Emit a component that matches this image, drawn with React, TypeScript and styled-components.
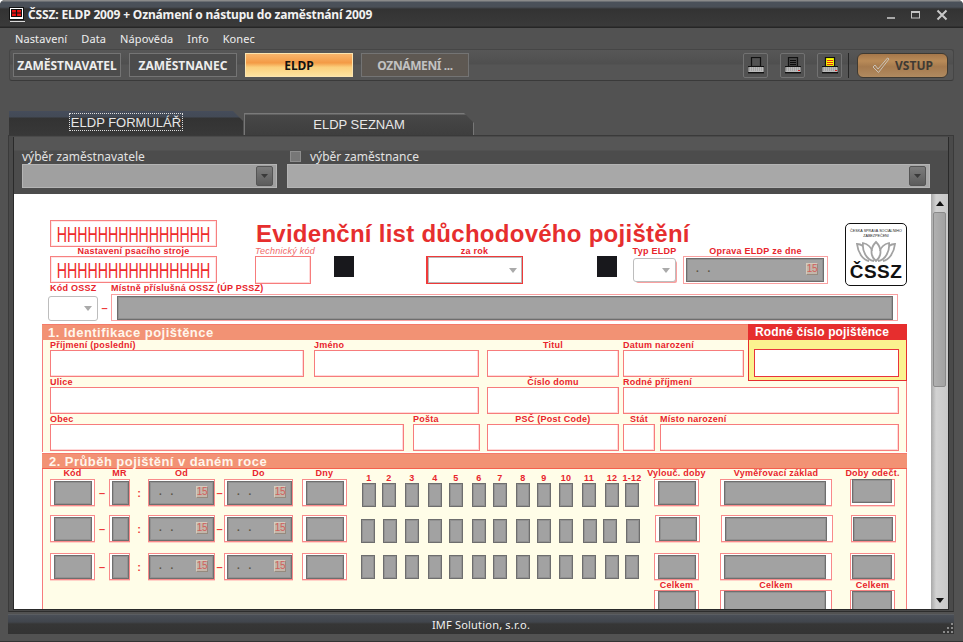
import React from "react";
import styled, { createGlobalStyle } from "styled-components";

const UI_FONT = `"Noto Sans", "Liberation Sans", sans-serif`;
const FORM_FONT = `"Liberation Sans", Arial, sans-serif`;

const GlobalStyle = createGlobalStyle`
  html, body {
    margin: 0;
    padding: 0;
    background: #fff;
  }
  * {
    box-sizing: border-box;
  }
`;

const MENU = ["Nastavení", "Data", "Nápověda", "Info", "Konec"];

const SECTION_ONE = [
  [
    { label: "Příjmení (poslední)", x: 0, w: 254 },
    { label: "Jméno", x: 10, w: 165 },
    { label: "Titul", x: 8, w: 132, center: true },
    { label: "Datum narození", x: 4, w: 121 },
  ],
  [
    { label: "Ulice", x: 0, w: 429 },
    { label: "Číslo domu", x: 8, w: 132, center: true },
    { label: "Rodné příjmení", x: 4, w: 276 },
  ],
  [
    { label: "Obec", x: 0, w: 354 },
    { label: "Pošta", x: 9, w: 67 },
    { label: "PSČ (Post Code)", x: 7, w: 132, center: true },
    { label: "Stát", x: 4, w: 32, center: true },
    { label: "Místo narození", x: 5, w: 239 },
  ],
];

const MONTH_LABELS = ["1", "2", "3", "4", "5", "6", "7", "8", "9", "10", "11", "12", "1-12"];

const MONTH_ROWS = [
  { top: 4, height: 36, xs: [362, 382, 405, 428, 449, 472, 493, 516, 537, 559, 582, 605, 625] },
  { top: 4, height: 38, xs: [361, 383, 405, 428, 449, 472, 493, 516, 537, 559, 583, 603, 626] },
  { top: 2, height: 28, xs: [361, 383, 405, 428, 449, 472, 493, 516, 537, 559, 582, 605, 625] },
];

function TitleIcon() {
  return (
    <svg width="16" height="16" viewBox="0 0 16 16">
      <rect x="0.5" y="0.5" width="14" height="12" fill="#fff" stroke="#111" />
      <rect x="2" y="2" width="11" height="8" fill="#111" />
      <rect x="3" y="3" width="9" height="6" fill="#e11" />
      <path d="M7.5 3v6M3 6h9" stroke="#111" strokeWidth="1.2" />
      <path d="M1 14.5h15" stroke="#ddd" />
    </svg>
  );
}

function WindowButtons() {
  return (
    <WindowControls>
      <svg width="10" height="10" viewBox="0 0 10 10">
        <rect x="1" y="7" width="8" height="2" fill="#a8a8a8" />
      </svg>
      <svg width="10" height="10" viewBox="0 0 10 10">
        <rect x="0.5" y="1.5" width="8" height="6.5" fill="none" stroke="#c4c4c4" />
        <rect x="0.5" y="1" width="8" height="2" fill="#c4c4c4" />
      </svg>
      <svg width="12" height="12" viewBox="0 0 12 12">
        <path d="M1.5 1.5l9 9M10.5 1.5l-9 9" stroke="#c8c8c8" strokeWidth="2" />
      </svg>
    </WindowControls>
  );
}

function PrinterIcon({ kind }: { kind: "blank" | "text" | "yellow" }) {
  const paper = kind === "yellow" ? "#ff0" : kind === "text" ? "#484848" : "none";
  const lines = kind === "yellow" ? "#e8301c" : "#0c0c0c";
  return (
    <svg width="17" height="17" viewBox="0 0 17 17">
      <rect x="3.5" y="0.5" width="9" height="9" fill={paper} stroke="#111" strokeWidth="1.2" />
      {kind !== "blank" &&
        [3, 5, 7].map((y) => <path key={y} d={`M5 ${y + 0.5}h6`} stroke={lines} strokeWidth="1" />)}
      <rect x="0" y="9" width="16" height="1.4" fill="#111" />
      <rect x="0.5" y="10" width="15" height="5" fill="#b9b9b9" />
      <path d="M1 11h14M1 13h14" stroke="#8c8c8c" strokeWidth="1" strokeDasharray="1 1" />
      <rect x="0" y="15" width="16" height="1.4" fill="#111" />
      {kind !== "blank" && <rect x="13" y="13" width="2" height="1" fill="#d22" />}
    </svg>
  );
}

function CheckMark() {
  return (
    <svg width="18" height="17" viewBox="0 0 18 17">
      <path
        d="M1 10l2-2 3 4L15.5 1 17 2 6.5 15.5z"
        fill="none"
        stroke="#c9c2b8"
        strokeWidth="1"
      />
    </svg>
  );
}

function Lotus() {
  return (
    <svg width="40" height="22" viewBox="0 0 40 22">
      <g fill="none" stroke="#a2a2a2" strokeWidth="1.8">
        <path d="M20 21C14 16 14 8 20 2c6 6 6 14 0 19z" />
        <path d="M18 21C10 20 6 10 7 3c4 1 8 4 9 8" />
        <path d="M22 21c8-1 12-11 11-18-4 1-8 4-9 8" />
        <path d="M13 21C7 20 2 13 1 4c2 0 4 .5 6 2" />
        <path d="M27 21c6-1 11-8 12-17-2 0-4 .5-6 2" />
      </g>
    </svg>
  );
}

function Arrow() {
  return <ArrowGlyph />;
}

function ComboButton() {
  return (
    <DarkButton>
      <svg width="7" height="4" viewBox="0 0 7 4">
        <path d="M0 0h7L3.5 4z" fill="#3a3a3a" />
      </svg>
    </DarkButton>
  );
}

function DateMask() {
  return (
    <>
      <DateDots>. .</DateDots>
      <CalendarButton>15</CalendarButton>
    </>
  );
}

function GrayCell({
  w,
  ml = 0,
  left = 3,
  right = 2,
  date,
  raised,
}: {
  w: number;
  ml?: number;
  left?: number;
  right?: number;
  date?: boolean;
  raised?: boolean;
}) {
  return (
    <CellFrame $w={w} $ml={ml} $left={left} $right={right}>
      <GrayBox $raised={raised}>{date && <DateMask />}</GrayBox>
    </CellFrame>
  );
}

function PeriodRow({
  index,
  height,
  top,
  xs,
}: {
  index: number;
  height: number;
  top: number;
  xs: number[];
}) {
  return (
    <PeriodLine $height={height}>
      <GrayCell w={45} />
      <Separator $w={14}>–</Separator>
      <GrayCell w={21} left={2} right={0} />
      <Separator $w={18}>:</Separator>
      <GrayCell w={67} left={0} right={0} date />
      <Separator $w={9}>–</Separator>
      <GrayCell w={69} left={2} right={0} date />
      <GrayCell w={45} ml={9} />
      <Months $top={top}>
        {xs.map((x, i) => (
          <MonthBox key={x} $ml={x - (i === 0 ? 347 : xs[i - 1] + 14)} />
        ))}
      </Months>
      <GrayCell w={45} ml={15} />
      <GrayCell w={112} ml={21} right={5} />
      <GrayCell w={45} ml={18} left={1} raised={index === 0} />
    </PeriodLine>
  );
}

export default function App() {
  return (
    <Window>
      <GlobalStyle />
      <TitleBar>
        <TitleIcon />
        <TitleText>ČSSZ: ELDP 2009 + Oznámení o nástupu do zaměstnání 2009</TitleText>
        <WindowButtons />
      </TitleBar>
      <MenuBar>
        {MENU.map((item) => (
          <MenuItem key={item}>{item}</MenuItem>
        ))}
      </MenuBar>
      <Toolbar>
        <NavButton>ZAMĚSTNAVATEL</NavButton>
        <NavButton>ZAMĚSTNANEC</NavButton>
        <NavButton $variant="active">ELDP</NavButton>
        <NavButton $variant="muted">OZNÁMENÍ ...</NavButton>
        <ToolbarRight>
          <PrintButton>
            <PrinterIcon kind="blank" />
          </PrintButton>
          <PrintButton>
            <PrinterIcon kind="text" />
          </PrintButton>
          <PrintButton>
            <PrinterIcon kind="yellow" />
          </PrintButton>
          <ToolbarDivider />
          <EnterButton>
            <CheckMark />
            VSTUP
          </EnterButton>
        </ToolbarRight>
      </Toolbar>
      <TabStrip>
        <ActiveTab>
          <FocusLabel>ELDP FORMULÁŘ</FocusLabel>
        </ActiveTab>
        <IdleTab>ELDP SEZNAM</IdleTab>
      </TabStrip>
      <Panel>
        <PanelInner>
          <Pickers>
            <Picker $w={255}>
              <PickerLabel>výběr zaměstnavatele</PickerLabel>
              <PickerBox $shade="#a0a0a0">
                <ComboButton />
              </PickerBox>
            </Picker>
            <Picker $w={643}>
              <PickerLabel>
                <FakeCheck />
                výběr zaměstnance
              </PickerLabel>
              <PickerBox $shade="#a8a8a8">
                <ComboButton />
              </PickerBox>
            </Picker>
          </Pickers>
          <Viewport>
            <Sheet>
              <SheetHeader>
                <PrinterColumn>
                  <PrinterBox>
                    <PrinterRun>HHHHHHHHHHHHHHH</PrinterRun>
                  </PrinterBox>
                  <CenterLabel>Nastavení psacího stroje</CenterLabel>
                  <PrinterBox>
                    <PrinterRun>HHHHHHHHHHHHHHH</PrinterRun>
                  </PrinterBox>
                </PrinterColumn>
                <HeaderMiddle>
                  <SheetTitle>Evidenční list důchodového pojištění</SheetTitle>
                  <HeaderFields>
                    <HeaderField $w={56}>
                      <ItalicLabel>Technický kód</ItalicLabel>
                      <WhiteBox />
                    </HeaderField>
                    <BlackMark $ml={23} />
                    <HeaderField $w={97} $ml={72}>
                      <CenterLabel>za rok</CenterLabel>
                      <YearBox>
                        <Arrow />
                      </YearBox>
                    </HeaderField>
                    <BlackMark $ml={74} />
                    <HeaderField $w={43} $ml={16}>
                      <CenterLabel>Typ ELDP</CenterLabel>
                      <TypeBox>
                        <Arrow />
                      </TypeBox>
                    </HeaderField>
                    <HeaderField $w={145} $ml={7}>
                      <CenterLabel>Oprava ELDP ze dne</CenterLabel>
                      <CorrectionBox>
                        <GrayBox>
                          <DateMask />
                        </GrayBox>
                      </CorrectionBox>
                    </HeaderField>
                  </HeaderFields>
                </HeaderMiddle>
                <Logo>
                  <LogoCaption>ČESKÁ SPRÁVA SOCIÁLNÍHO ZABEZPEČENÍ</LogoCaption>
                  <Lotus />
                  <LogoMark>ČSSZ</LogoMark>
                </Logo>
              </SheetHeader>
              <OfficeRow>
                <OfficeCode>
                  <FieldLabel>Kód OSSZ</FieldLabel>
                  <CodeSelect>
                    <Arrow />
                  </CodeSelect>
                </OfficeCode>
                <Separator $w={13}>–</Separator>
                <OfficeName>
                  <FieldLabel>Místně příslušná OSSZ (ÚP PSSZ)</FieldLabel>
                  <OfficeBox>
                    <GrayBox />
                  </OfficeBox>
                </OfficeName>
              </OfficeRow>
              <SectionOne>
                <SectionBar>1. Identifikace pojištěnce</SectionBar>
                <RodneCislo>
                  <RodneHead>Rodné číslo pojištěnce</RodneHead>
                  <RodneBody>
                    <RodneInput />
                  </RodneBody>
                </RodneCislo>
                <SectionBody>
                  {SECTION_ONE.map((row, i) => (
                    <FieldRow key={i}>
                      {row.map((f) => (
                        <Field key={f.label} $w={f.w} $ml={f.x}>
                          <FieldLabel $center={f.center}>{f.label}</FieldLabel>
                          <WhiteBox />
                        </Field>
                      ))}
                    </FieldRow>
                  ))}
                </SectionBody>
              </SectionOne>
              <SectionTwo>
                <SectionBar $second>2. Průběh pojištění v daném roce</SectionBar>
                <PeriodBody>
                  <ColumnHeads>
                    <ColumnHead $w={45}>Kód</ColumnHead>
                    <ColumnHead $w={21} $ml={14}>MR</ColumnHead>
                    <ColumnHead $w={67} $ml={18}>Od</ColumnHead>
                    <ColumnHead $w={69} $ml={9}>Do</ColumnHead>
                    <ColumnHead $w={45} $ml={9}>Dny</ColumnHead>
                    <MonthHeads>
                      {MONTH_LABELS.map((m, i) => (
                        <ColumnHead
                          key={m}
                          $w={14}
                          $ml={i === 0 ? 15 : MONTH_ROWS[0].xs[i] - MONTH_ROWS[0].xs[i - 1] - 14}
                        >
                          {m}
                        </ColumnHead>
                      ))}
                    </MonthHeads>
                    <ColumnHead $w={45} $ml={15}>Vylouč. doby</ColumnHead>
                    <ColumnHead $w={112} $ml={21}>Vyměřovací základ</ColumnHead>
                    <ColumnHead $w={45} $ml={18}>Doby odečt.</ColumnHead>
                  </ColumnHeads>
                  {MONTH_ROWS.map((row, i) => (
                    <PeriodRow key={i} index={i} height={row.height} top={row.top} xs={row.xs} />
                  ))}
                  <TotalsLine>
                    <TotalCell $w={45} $ml={604}>
                      <CenterLabel>Celkem</CenterLabel>
                      <TotalBox $left={3} $right={2}>
                        <GrayBox />
                      </TotalBox>
                    </TotalCell>
                    <TotalCell $w={112} $ml={21}>
                      <CenterLabel>Celkem</CenterLabel>
                      <TotalBox $left={3} $right={5}>
                        <GrayBox />
                      </TotalBox>
                    </TotalCell>
                    <TotalCell $w={45} $ml={18}>
                      <CenterLabel>Celkem</CenterLabel>
                      <TotalBox $left={1} $right={2}>
                        <GrayBox />
                      </TotalBox>
                    </TotalCell>
                  </TotalsLine>
                </PeriodBody>
              </SectionTwo>
            </Sheet>
            <ScrollBar>
              <ScrollArrow $up />
              <ScrollThumb />
              <ScrollArrow />
            </ScrollBar>
          </Viewport>
        </PanelInner>
      </Panel>
      <StatusBar>
        IMF Solution, s.r.o.
        <GripDots>
          <svg width="12" height="12" viewBox="0 0 12 12">
            <path d="M9 1h2v2H9zM5 5h2v2H5zM9 5h2v2H9zM1 9h2v2H1zM5 9h2v2H5zM9 9h2v2H9z" fill="#8a8a8a" />
          </svg>
        </GripDots>
      </StatusBar>
    </Window>
  );
}

const Window = styled.div`
  width: 963px;
  height: 642px;
  overflow: hidden;
  display: flex;
  flex-direction: column;
  padding: 0 9px 0 8px;
  background: #525252;
  border-radius: 5px 5px 0 0;
  border-bottom: 1px solid #333;
  font-family: ${UI_FONT};
`;

const TitleBar = styled.div`
  height: 28px;
  margin: 0 -9px 0 -8px;
  padding: 7px 15px 0 9px;
  display: flex;
  align-items: flex-start;
  gap: 3px;
  color: #f2f2f2;
  background: linear-gradient(#8a8a8a 0, #8a8a8a 1px, #4a515a 2px, #4a4f57 7px, #333 9px, #3a3a3a 26px, #262626 27px);
`;

const TitleText = styled.div`
  font: bold 12px/15px "Noto Sans", sans-serif;
  letter-spacing: -0.16px;
`;

const WindowControls = styled.div`
  margin-left: auto;
  display: flex;
  align-items: center;
  gap: 15px;
  padding-top: 2px;
`;

const MenuBar = styled.div`
  height: 21px;
  display: flex;
  align-items: center;
  gap: 14px;
  padding-left: 7px;
`;

const MenuItem = styled.div`
  color: #eee;
  font-size: 11px;
  letter-spacing: 0.1px;
`;

const Toolbar = styled.div`
  height: 32px;
  margin-left: 1px;
  padding: 0 5px 0 3px;
  display: flex;
  align-items: center;
  gap: 8px;
  border-radius: 3px;
  border: 1px solid #464646;
  border-bottom-color: #3a3a3a;
  background: linear-gradient(#575757 0, #4f4f4f 14px, #555 15px, #555 100%);
`;

const NavButton = styled.div<{ $variant?: "active" | "muted" }>`
  width: 108px;
  height: 24px;
  display: flex;
  align-items: center;
  justify-content: center;
  font: bold 12px ${UI_FONT};
  letter-spacing: ${(p) => (p.$variant === "muted" ? "-0.4px" : "0")};
  border: 1px solid ${(p) => (p.$variant === "active" ? "#fbe4b0" : "#747474")};
  color: ${(p) => (p.$variant === "active" ? "#111" : p.$variant === "muted" ? "#c2c2c2" : "#eee")};
  background: ${(p) =>
    p.$variant === "active"
      ? "linear-gradient(#f8b56c 0, #f39a45 40%, #fbcf7c 60%, #fde29f 100%)"
      : p.$variant === "muted"
        ? "#5e5852"
        : "#4c4c4c"};
`;

const ToolbarRight = styled.div`
  margin-left: auto;
  display: flex;
  align-items: center;
  gap: 12px;
`;

const PrintButton = styled.div`
  width: 25px;
  height: 25px;
  display: flex;
  align-items: center;
  justify-content: center;
  padding-left: 1px;
  border-radius: 2px;
  border: 1px solid #727272;
  background: #525252;
`;

const ToolbarDivider = styled.div`
  width: 1px;
  height: 25px;
  margin: 0 -4px 0 -6px;
  background: #252525;
`;

const EnterButton = styled.div`
  width: 91px;
  height: 25px;
  display: flex;
  align-items: center;
  justify-content: center;
  gap: 5px;
  font: bold 12px ${UI_FONT};
  color: #3f3a34;
  border-radius: 6px;
  border: 1px solid #3f3a32;
  background: linear-gradient(#a5774a 0, #b98b58 30%, #a57a4e 55%, #b08a60 100%);
`;

const TabStrip = styled.div`
  height: 24px;
  margin-top: 30px;
  margin-left: 1px;
  display: flex;
  align-items: flex-end;
  gap: 1px;
`;

const ActiveTab = styled.div`
  width: 234px;
  height: 24px;
  display: flex;
  justify-content: center;
  padding: 2px 0 0 0;
  clip-path: polygon(0 0, 224px 0, 100% 10px, 100% 100%, 0 100%);
  background: linear-gradient(#454c5a 0, #434a56 6px, #333 7px, #383838 100%);
`;

const FocusLabel = styled.div`
  height: 18px;
  padding: 0 1px;
  color: #e8e8e8;
  font: 13px/17px ${FORM_FONT};
  border: 1px dotted #ddd;
`;

const IdleTab = styled.div`
  width: 230px;
  height: 22px;
  display: flex;
  align-items: center;
  justify-content: center;
  color: #e8e8e8;
  font: 13px ${FORM_FONT};
  clip-path: polygon(0 0, 220px 0, 100% 10px, 100% 100%, 0 100%);
  background: linear-gradient(#7a7a7a 0, #7a7a7a 1px, #474747 2px, #3e3e3e 100%);
  border-left: 1px solid #777;
  border-right: 1px solid #777;
`;

const Panel = styled.div`
  height: 477px;
  padding: 1px 4px 1px 4px;
  border: 1px solid #3a3a3a;
  border-bottom-color: #2d2d2d;
  background: #4a4a4a;
`;

const PanelInner = styled.div`
  height: 100%;
  display: flex;
  flex-direction: column;
  border: 1px solid #2a2a2a;
  border-top: 0;
`;

const Pickers = styled.div`
  height: 57px;
  padding: 12px 0 0 8px;
  display: flex;
  gap: 10px;
  background: linear-gradient(#565656 0, #565656 13px, #4c4c4c 14px);
`;

const Picker = styled.div<{ $w: number }>`
  width: ${(p) => p.$w}px;
`;

const PickerLabel = styled.div`
  height: 15px;
  display: flex;
  align-items: center;
  gap: 9px;
  color: #e2e2e2;
  font: 12px/15px ${UI_FONT};
`;

const FakeCheck = styled.span`
  width: 11px;
  height: 11px;
  margin-left: 3px;
  background: #777;
  border: 1px solid #8e8e8e;
`;

const PickerBox = styled.div<{ $shade: string }>`
  height: 24px;
  display: flex;
  justify-content: flex-end;
  align-items: center;
  padding-right: 3px;
  background: ${(p) => p.$shade};
  border: 1px solid #b4b4b4;
`;

const DarkButton = styled.div`
  width: 17px;
  height: 20px;
  display: flex;
  align-items: center;
  justify-content: center;
  border-radius: 2px;
  border: 1px solid #555;
  background: linear-gradient(#7c7c7c, #5c5c5c);
`;

const Viewport = styled.div`
  flex: 1;
  min-height: 0;
  display: flex;
`;

const Sheet = styled.div`
  width: 918px;
  height: 100%;
  overflow: hidden;
  padding-top: 26px;
  display: flex;
  flex-direction: column;
  background: #fff;
  font-family: ${FORM_FONT};
`;

const SheetHeader = styled.div`
  height: 64px;
  flex: none;
  padding-left: 36px;
  display: flex;
`;

const PrinterColumn = styled.div`
  width: 167px;
  flex: none;
`;

const PrinterBox = styled.div`
  height: 27px;
  display: flex;
  align-items: center;
  justify-content: center;
  overflow: hidden;
  border: 1px solid #f78080;
  box-shadow: inset 0 0 0 1px rgba(255, 170, 170, 0.3);
`;

const PrinterRun = styled.span`
  color: #ee2a2a;
  font: 14.2px/14px ${FORM_FONT};
  transform: scaleY(1.5);
`;

const FieldLabel = styled.div<{ $center?: boolean }>`
  height: 9px;
  color: #e8242c;
  white-space: nowrap;
  font: bold 9px/9px ${FORM_FONT};
  letter-spacing: 0.25px;
  text-align: ${(p) => (p.$center ? "center" : "left")};
  margin-bottom: 0;
`;

const CenterLabel = styled(FieldLabel).attrs({ $center: true })`
  display: flex;
  justify-content: center;
`;

const ItalicLabel = styled(FieldLabel)`
  font-weight: normal;
  font-style: italic;
  color: #f06a6a;
`;

const HeaderMiddle = styled.div`
  width: 573px;
  margin-left: 38px;
  flex: none;
`;

const SheetTitle = styled.div`
  height: 27px;
  padding-left: 1px;
  color: #e62e2e;
  white-space: nowrap;
  font: bold 24px/27px ${FORM_FONT};
  letter-spacing: 0.27px;
`;

const HeaderFields = styled.div`
  display: flex;
  align-items: flex-start;
`;

const HeaderField = styled.div<{ $w: number; $ml?: number }>`
  width: ${(p) => p.$w}px;
  margin-left: ${(p) => p.$ml ?? 0}px;
  flex: none;
`;

const BlackMark = styled.div<{ $ml: number }>`
  width: 20px;
  height: 21px;
  margin-top: 9px;
  margin-left: ${(p) => p.$ml}px;
  flex: none;
  background: #18181c;
`;

const WhiteBox = styled.div`
  height: 28px;
  background: #fff;
  border: 1px solid #f77c7c;
  box-shadow: inset -1px -1px 0 rgba(255, 170, 170, 0.45);
`;

const ArrowGlyph = styled.span`
  width: 0;
  height: 0;
  border-left: 4.5px solid transparent;
  border-right: 4.5px solid transparent;
  border-top: 5px solid #aaa;
`;

const YearBox = styled(WhiteBox)`
  display: flex;
  align-items: center;
  justify-content: flex-end;
  padding-right: 5px;
  border: 1px solid #ef3a3a;
  border-left-width: 2px;
  box-shadow: inset 1px 1px 0 #b8b8b8, inset -1px -1px 0 #b8b8b8;
`;

const TypeBox = styled(WhiteBox)`
  height: 24px;
  margin-top: 2px;
  display: flex;
  align-items: center;
  justify-content: flex-end;
  padding-right: 5px;
  border: 1px solid #bdbdbd;
  border-radius: 3px;
  box-shadow: 2px 2px 0 -1px #f9a0a0;
`;

const CorrectionBox = styled.div`
  height: 28px;
  padding: 1px 3px 1px 2px;
  display: flex;
  border: 1px solid #f9a0a0;
`;

const Logo = styled.div`
  width: 62px;
  height: 63px;
  margin: 3px 0 0 17px;
  flex: none;
  display: flex;
  flex-direction: column;
  align-items: center;
  padding-top: 5px;
  background: #fff;
  border: 1.5px solid #111;
  border-radius: 5px;
`;

const LogoCaption = styled.div`
  width: 56px;
  height: 11px;
  color: #222;
  text-align: center;
  font: 3.7px/5px ${FORM_FONT};
`;

const LogoMark = styled.div`
  color: #111;
  font: bold 19px/19px ${FORM_FONT};
  letter-spacing: 0.5px;
`;

const OfficeRow = styled.div`
  height: 37px;
  flex: none;
  padding-left: 34px;
  display: flex;
  align-items: flex-end;
`;

const OfficeCode = styled.div`
  width: 50px;
  flex: none;
  ${FieldLabel} {
    padding-left: 2px;
    margin-bottom: 3px;
  }
`;

const CodeSelect = styled.div`
  height: 25px;
  display: flex;
  align-items: center;
  justify-content: flex-end;
  padding-right: 5px;
  background: #fff;
  border: 1px solid #bdbdbd;
  border-radius: 3px;
`;

const OfficeName = styled.div`
  width: 787px;
  flex: none;
  ${FieldLabel} {
    margin-bottom: 1px;
  }
`;

const OfficeBox = styled.div`
  height: 27px;
  padding: 1px 4px 0 5px;
  display: flex;
  border: 1px solid #f9a0a0;
`;

const SectionOne = styled.div`
  position: relative;
  width: 865px;
  margin: 3px 0 0 28px;
  flex: none;
`;

const SectionBar = styled.div<{ $second?: boolean }>`
  height: 16px;
  padding-left: ${(p) => (p.$second ? 7 : 6)}px;
  color: #fff6ec;
  background: #f29274;
  border-top: 1px solid #f57a6a;
  border-bottom: ${(p) => (p.$second ? "1px solid #f4604e" : "0")};
  white-space: nowrap;
  font: bold 13px/15px ${FORM_FONT};
  letter-spacing: 0.45px;
`;

const SectionBody = styled.div`
  height: 112px;
  padding: 1px 7px 0 7px;
  background: #fffde8;
  border-left: 1px solid #f77c7c;
  border-right: 1px solid #f77c7c;
`;

const FieldRow = styled.div`
  height: 37px;
  display: flex;
`;

const Field = styled.div<{ $w: number; $ml: number }>`
  width: ${(p) => p.$w}px;
  margin-left: ${(p) => p.$ml}px;
  flex: none;
  ${WhiteBox} {
    height: 27px;
  }
`;

const RodneCislo = styled.div`
  position: absolute;
  top: 0;
  right: 0;
  width: 159px;
  height: 57px;
`;

const RodneHead = styled.div`
  height: 16px;
  padding-left: 7px;
  color: #fff;
  background: #e62e2e;
  white-space: nowrap;
  font: bold 12px/16px ${FORM_FONT};
  letter-spacing: 0.15px;
`;

const RodneBody = styled.div`
  height: 41px;
  padding: 9px 7px 2px 5px;
  background: #fbf28f;
  border: 1px solid #e62e2e;
  border-top: 0;
`;

const RodneInput = styled.div`
  height: 28px;
  background: #fff;
  border: 1px solid #e8343c;
`;

const SectionTwo = styled.div`
  width: 865px;
  margin: 1px 0 0 28px;
  flex: 1;
  display: flex;
  flex-direction: column;
`;

const PeriodBody = styled.div`
  flex: 1;
  padding: 0 7px;
  background: #fffde8;
  border-left: 1px solid #f77c7c;
  border-right: 1px solid #f77c7c;
`;

const ColumnHeads = styled.div`
  height: 10px;
  display: flex;
`;

const MonthHeads = styled.div`
  display: flex;
  padding-top: 5px;
`;

const ColumnHead = styled.div<{ $w: number; $ml?: number }>`
  width: ${(p) => p.$w}px;
  margin-left: ${(p) => p.$ml ?? 0}px;
  flex: none;
  display: flex;
  justify-content: center;
  white-space: nowrap;
  color: #e8242c;
  font: bold 9px/9px ${FORM_FONT};
  letter-spacing: 0.25px;
`;

const PeriodLine = styled.div<{ $height: number }>`
  height: ${(p) => p.$height}px;
  display: flex;
  align-items: flex-start;
`;

const CellFrame = styled.div<{ $w: number; $ml: number; $left: number; $right: number }>`
  width: ${(p) => p.$w}px;
  height: 27px;
  margin-left: ${(p) => p.$ml}px;
  flex: none;
  display: flex;
  padding: 1px ${(p) => p.$right}px 1px ${(p) => p.$left}px;
  background: #fff;
  border: 1px solid #f98a8a;
  box-shadow: 0 1px 0 rgba(255, 170, 170, 0.5);
`;

const GrayBox = styled.div<{ $raised?: boolean }>`
  position: relative;
  flex: 1;
  height: 24px;
  margin-top: ${(p) => (p.$raised ? "-2px" : "0")};
  background: #a2a2a2;
  border: 1px solid #6e6e6e;
  box-shadow: inset 0 0 0 1px #929292;
`;

const DateDots = styled.span`
  position: absolute;
  left: 9px;
  top: 3px;
  color: #5c5544;
  font: bold 10px/14px ${FORM_FONT};
  letter-spacing: 3px;
`;

const CalendarButton = styled.span`
  position: absolute;
  right: 5px;
  top: 4px;
  width: 12px;
  height: 12px;
  display: flex;
  align-items: center;
  justify-content: center;
  color: #d0605c;
  background: #c4b6aa;
  border: 1px solid #d6cabc;
  border-right-color: #968a7e;
  border-bottom-color: #968a7e;
  font: 10px/10px ${FORM_FONT};
  letter-spacing: -0.4px;
`;

const Separator = styled.div<{ $w: number }>`
  width: ${(p) => p.$w}px;
  height: 27px;
  flex: none;
  display: flex;
  align-items: center;
  justify-content: center;
  color: #ee3a3a;
  font: bold 11px/14px ${FORM_FONT};
`;

const Months = styled.div<{ $top: number }>`
  display: flex;
  flex: none;
  padding-top: ${(p) => p.$top}px;
`;

const MonthBox = styled.div<{ $ml: number }>`
  width: 14px;
  height: 24px;
  margin-left: ${(p) => p.$ml}px;
  flex: none;
  background: #a2a2a2;
  border: 1px solid #6e6e6e;
  box-shadow: inset 0 0 0 1px #929292;
`;

const TotalsLine = styled.div`
  display: flex;
`;

const TotalCell = styled.div<{ $w: number; $ml: number }>`
  width: ${(p) => p.$w}px;
  margin-left: ${(p) => p.$ml}px;
  flex: none;
`;

const TotalBox = styled.div<{ $left: number; $right: number }>`
  height: 27px;
  display: flex;
  padding: 0 ${(p) => p.$right}px 0 ${(p) => p.$left}px;
  background: #fff;
  border: 1px solid #f78080;
`;

const ScrollBar = styled.div`
  width: 17px;
  height: 100%;
  display: flex;
  flex-direction: column;
  align-items: center;
  background: linear-gradient(90deg, #a8a8a8, #d2d2d2 30%, #c8c8c8);
`;

const ScrollArrow = styled.div<{ $up?: boolean }>`
  width: 0;
  height: 0;
  margin: ${(p) => (p.$up ? "7px 0 6px" : "auto 0 6px")};
  border-left: 4.5px solid transparent;
  border-right: 4.5px solid transparent;
  border-bottom: ${(p) => (p.$up ? "5px solid #111" : "0")};
  border-top: ${(p) => (p.$up ? "0" : "5px solid #111")};
`;

const ScrollThumb = styled.div`
  width: 13px;
  height: 175px;
  border-radius: 2px;
  border: 1px solid #8a8a8a;
  background: linear-gradient(90deg, #b0b0b0, #a2a2a2);
`;

const StatusBar = styled.div`
  position: relative;
  height: 20px;
  margin-top: 2px;
  flex: none;
  display: flex;
  align-items: center;
  justify-content: center;
  color: #f0f0f0;
  font: 11px ${UI_FONT};
  letter-spacing: 0.2px;
  background: linear-gradient(#6a6a6a 0, #4a4f57 1px, #41454c 8px, #363636 10px, #333 100%);
`;

const GripDots = styled.span`
  position: absolute;
  right: 0;
  bottom: 0;
  height: 12px;
`;
